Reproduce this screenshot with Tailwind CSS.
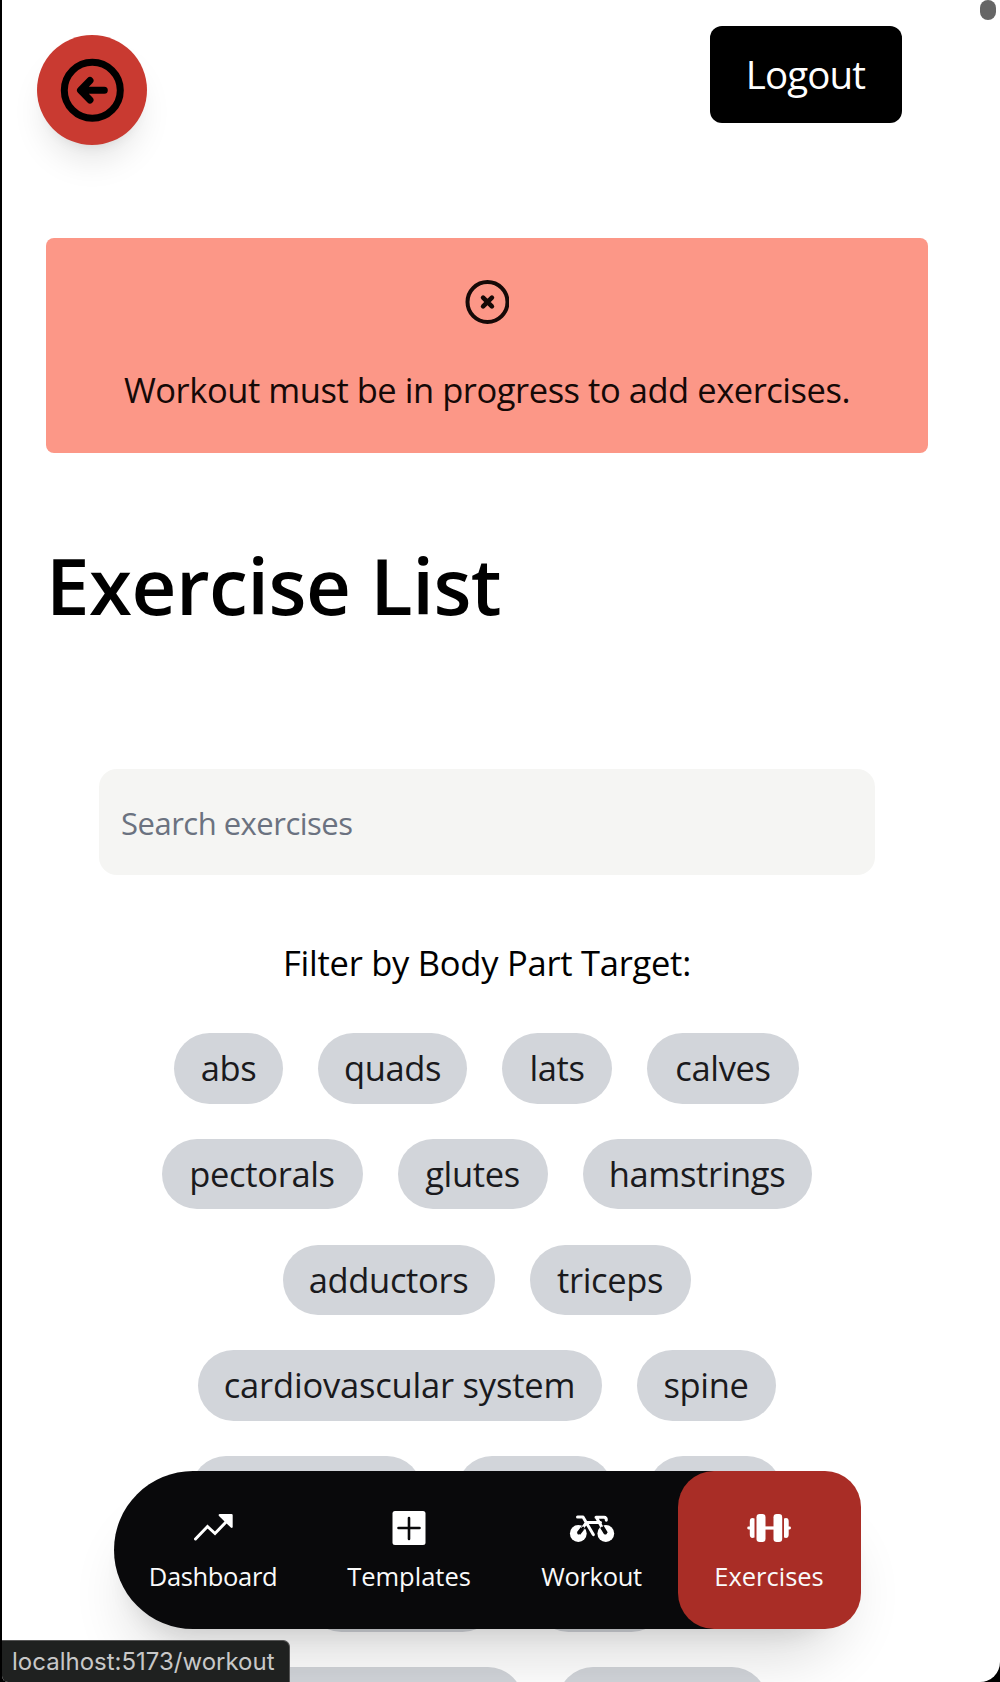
<!DOCTYPE html>
<html lang="en">
<head>
<meta charset="utf-8">
<title>Exercise List</title>
<script src="https://cdn.jsdelivr.net/npm/@tailwindcss/browser@4"></script>
</head>
<body class="bg-black font-['Open_Sans',sans-serif] text-black">
<div class="relative h-[1682px] w-[1000px] overflow-hidden border-l-2 border-black bg-black">
  <div class="relative h-full overflow-hidden rounded-br-[20px] rounded-bl-[6px] bg-white">

    <header class="flex h-[238px] items-start justify-between pl-[35px] pr-[98px]">
      <button class="mt-[35px] flex size-[110px] items-center justify-center rounded-full bg-[#c93a31] shadow-[0_22px_33px_-6.6px_rgba(0,0,0,0.1),0_9px_13px_-9px_rgba(0,0,0,0.1)]" aria-label="Back">
        <svg class="size-[70px]" viewBox="0 0 70 70" fill="none" stroke="#000" stroke-width="7" stroke-linecap="round" stroke-linejoin="round">
          <circle cx="35.3" cy="35.3" r="28"/>
          <path d="M33 25.5 23.5 35.3 33 45M24.5 35.3H47.3"/>
        </svg>
      </button>
      <button class="mt-[26px] h-[97px] w-[192px] rounded-[12px] bg-black pr-[1px] text-[38.5px] tracking-[-0.9px] text-white">Logout</button>
    </header>

    <main class="flex flex-col">
      <section class="ml-[44px] flex h-[215px] w-[882px] flex-col items-center rounded-[8px] bg-[#fc9787] pt-[41.5px] text-[#150907]">
        <svg class="size-[44px]" viewBox="0 0 44 44" fill="none" stroke="currentColor" stroke-width="4" stroke-linecap="round" stroke-linejoin="round">
          <circle cx="22.5" cy="22" r="20"/>
          <path d="M18.1 17.6l8.8 8.8M26.9 17.6l-8.8 8.8" stroke-width="4.6"/>
        </svg>
        <p class="mt-[39px] text-[34.5px] leading-[53px] tracking-[-0.46px] whitespace-nowrap">Workout must be in progress to add exercises.</p>
      </section>

      <h1 class="mt-[87.5px] ml-[44px] text-[78px] leading-[88px] font-[570] tracking-[-0.5px]">Exercise List</h1>

      <input class="mt-[140.5px] ml-[97px] h-[106px] w-[776px] rounded-[18px] bg-[#f5f5f3] px-[22px] pt-[1px] text-[31px] tracking-[-0.5px] placeholder:text-[#6b7280]" placeholder="Search exercises">

      <p class="mt-[61px] w-[970px] text-center text-[34.5px] leading-[53px] tracking-[-0.25px]">Filter by Body Part Target:</p>

      <div class="mt-[44.4px] flex w-[969px] flex-col gap-[35.2px] text-[34.5px] leading-[70.4px] tracking-[-0.35px] text-[#1a1a1d] [&_span]:h-[70.4px] [&_span]:rounded-full [&_span]:bg-[#d2d5da] [&_span]:text-center [&_span]:whitespace-nowrap [&>div]:flex [&>div]:justify-center [&>div]:gap-[35px]">
        <div><span class="w-[109px]">abs</span><span class="w-[149px]">quads</span><span class="w-[110px]">lats</span><span class="w-[152px]">calves</span></div>
        <div><span class="w-[201px]">pectorals</span><span class="w-[150px]">glutes</span><span class="w-[229px]">hamstrings</span></div>
        <div><span class="w-[212px]">adductors</span><span class="w-[161px]">triceps</span></div>
        <div><span class="w-[404px] tracking-[-0.2px]">cardiovascular system</span><span class="w-[139px]">spine</span></div>
        <div><span class="w-[231px]"></span><span class="w-[156px]"></span><span class="w-[134px]"></span></div>
        <div><span class="w-[192px]"></span><span class="w-[134px]"></span></div>
        <div><span class="w-[316px]"></span><span class="w-[209px]"></span></div>
      </div>
    </main>

    <!-- Floating bottom navigation -->
    <nav class="absolute top-[1471px] left-[111.5px] flex h-[158px] w-[747px] rounded-full bg-[#09090b] text-[25.5px] leading-[36px] text-[#fafafa] shadow-[0_44px_55px_-11px_rgba(0,0,0,0.12),0_18px_22px_-13px_rgba(0,0,0,0.1)] [&>a]:flex [&>a]:flex-col [&>a]:items-center [&>a]:gap-[8px] [&>a]:pt-[35px] [&_svg]:h-[44px] [&_svg]:w-[48px]">
      <a class="w-[199px] tracking-[-0.35px]">
        <svg viewBox="0 0 48 44">
          <path d="M6.5 33 18.5 20.5 26 27.5 38 15" fill="none" stroke="#fff" stroke-width="3" stroke-linecap="round" stroke-linejoin="miter"/>
          <path d="M30.5 8H42.5Q43.7 8 43.7 9.2V21Q43.2 22.8 41.8 21.6L30 10Q29 8.6 30.5 8Z" fill="#fff"/>
        </svg>
        Dashboard
      </a>
      <a class="w-[193px]">
        <svg viewBox="0 0 48 44">
          <rect x="7.5" y="5" width="33" height="34" rx="2.5" fill="#fff"/>
          <path d="M24 12V33M13.5 22H34.5" stroke="#09090b" stroke-width="2.6" stroke-linecap="round"/>
        </svg>
        Templates
      </a>
      <a class="w-[172px] tracking-[-0.3px]">
        <svg viewBox="0 0 48 44" fill="none" stroke="#fff" stroke-width="2.8" stroke-linecap="round" stroke-linejoin="round">
          <circle cx="10.3" cy="27.5" r="8.4" fill="#fff" stroke="none"/>
          <circle cx="37.8" cy="27.5" r="8.4" fill="#fff" stroke="none"/>
          <path d="M17.5 18.5 10.5 27.5M32.5 18.5 38 27.5" stroke="#09090b" stroke-width="4.2" stroke-linecap="butt"/>
          <path d="M9.5 11H15L25.3 28.6M18.5 16.4H32.5M28 11.2H36Q38.5 11.4 38.3 14.2M28.3 11.2 33.5 20.5M18.5 16.5 14.5 22" stroke-width="3"/>
          <path d="M10.5 27.3 15 21.8M37.7 27.3 34.2 21.8" stroke="#09090b" stroke-width="2.4"/>
        </svg>
        Workout
      </a>
      <a class="w-[183px] rounded-[36px] bg-[#a92d26]">
        <svg viewBox="0 0 48 44" fill="#fff">
          <rect x="11.5" y="8" width="9" height="28" rx="3.2"/>
          <rect x="28.5" y="8" width="8.7" height="28" rx="3.2"/>
          <rect x="19" y="20.4" width="11" height="3.2"/>
          <path d="M9.5 12.4V31.6Q4.8 33 4.8 28.5V15.5Q4.8 11 9.5 12.4ZM39 12.4V31.6Q43.7 33 43.7 28.5V15.5Q43.7 11 39 12.4Z"/>
          <rect x="2.2" y="20.6" width="5" height="2.8" rx="1.4"/>
          <rect x="41" y="20.6" width="5" height="2.8" rx="1.4"/>
        </svg>
        Exercises
      </a>
    </nav>

    <!-- Scrollbar thumb -->
    <div class="absolute top-0 left-[978px] h-[20px] w-[16px] rounded-full bg-[#666]"></div>

    <!-- Link status bubble -->
    <div class="absolute bottom-0 left-0 h-[42px] w-[288px] rounded-tr-[7px] border-t border-r border-[#555] bg-[#1f2120] pl-[10px] font-['Inter',sans-serif] text-[24px] leading-[42px] text-[#c8c8c8]">localhost:5173/workout</div>
  </div>
</div>
</body>
</html>
